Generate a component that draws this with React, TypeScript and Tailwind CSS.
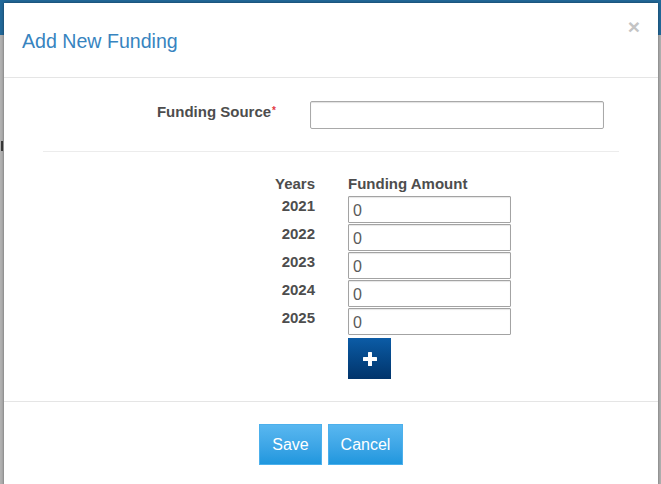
import { useState } from "react";

const years: number[] = [2021, 2022, 2023, 2024, 2025];

function PlusIcon() {
  return (
    <svg aria-hidden="true" viewBox="0 0 14 14" className="h-[14px] w-[14px]" fill="#ffffff">
      <rect x="5" y="0" width="4" height="14" rx="0.5" />
      <rect x="0" y="5" width="14" height="4" rx="0.5" />
    </svg>
  );
}

export default function App() {
  const [amounts, setAmounts] = useState<string[]>(years.map(() => "0"));
  const [source, setSource] = useState("");

  return (
    <div className="relative h-[484px] w-[661px] overflow-hidden bg-[#b2b2b2] font-['Liberation_Sans',Arial,sans-serif]">
      {/* page behind the backdrop */}
      <div className="h-[35px] w-full bg-[#22699a]" />
      <div className="ml-[1px] mt-[106px] h-[10px] w-[2px] bg-[#3a3a3a]" />

      {/* modal */}
      <div className="absolute left-[4px] top-[3px] w-[654px] bg-white shadow-[0_0_3px_rgba(0,0,0,0.45)]">
        <header className="relative flex h-[75px] items-center border-b border-[#e5e5e5] px-[18px]">
          <h4 className="pt-[1px] text-[19.6px] leading-[22px] text-[#3784bf]">Add New Funding</h4>
          <button
            type="button"
            className="absolute right-[18px] top-[13px] text-[21px] font-bold leading-none text-[#c4c4c4]"
          >
            ×
          </button>
        </header>

        <div className="px-[39px] pb-[22px] pt-[23px]">
          <div className="flex items-start">
            <label className="w-[233px] pt-[1px] text-right text-[15px] font-bold leading-[20px] text-[#4d4d4d]">
              Funding Source
              <span className="relative top-[3px] ml-[1px] align-top text-[10px] leading-[12px] text-[#e2373f]">*</span>
            </label>
            <input
              value={source}
              onChange={(e) => setSource(e.target.value)}
              className="ml-[34px] h-[28px] w-[294px] rounded-[2px] border border-[#a9a9a9] bg-white px-[6px] text-[15px] shadow-[inset_0_1px_1px_rgba(0,0,0,0.12)] outline-none"
            />
          </div>

          <div className="mt-[22px] border-t border-[#ececec]" />

          <div className="mt-[22px] pl-[232px]">
            <div className="flex text-[15px] font-bold leading-[20px] text-[#4d4d4d]">
              <span className="w-[40px] text-right">Years</span>
              <span className="ml-[33px]">Funding Amount</span>
            </div>
            <div className="mt-[2px] flex flex-col gap-[1px]">
              {years.map((year, i) => (
                <div key={year} className="flex items-start">
                  <span className="w-[40px] text-right text-[15px] font-bold leading-[20px] text-[#4d4d4d]">
                    {year}
                  </span>
                  <input
                    value={amounts[i]}
                    onChange={(e) => {
                      const next = [...amounts];
                      next[i] = e.target.value;
                      setAmounts(next);
                    }}
                    className="ml-[33px] h-[27px] w-[163px] rounded-[1px] border border-[#a3a3a3] bg-white px-[4px] pt-[2px] text-[16px] text-[#5a5a5a] shadow-[inset_0_1px_1px_rgba(0,0,0,0.1)] outline-none"
                  />
                </div>
              ))}
            </div>
            <button
              type="button"
              className="ml-[73px] mt-[3px] flex h-[41px] w-[43px] items-center justify-center bg-gradient-to-b from-[#0c5ca6] to-[#02346b]"
            >
              <PlusIcon />
            </button>
          </div>
        </div>

        <footer className="flex justify-center gap-[6px] border-t border-[#e5e5e5] pb-[30px] pt-[22px]">
          <button
            type="button"
            className="h-[41px] w-[63px] border border-[#4cb0ec] bg-gradient-to-b from-[#58b7f0] to-[#1f97de] text-[16px] text-white"
          >
            Save
          </button>
          <button
            type="button"
            className="h-[41px] w-[75px] border border-[#4cb0ec] bg-gradient-to-b from-[#58b7f0] to-[#1f97de] text-[16px] text-white"
          >
            Cancel
          </button>
        </footer>
      </div>
    </div>
  );
}
